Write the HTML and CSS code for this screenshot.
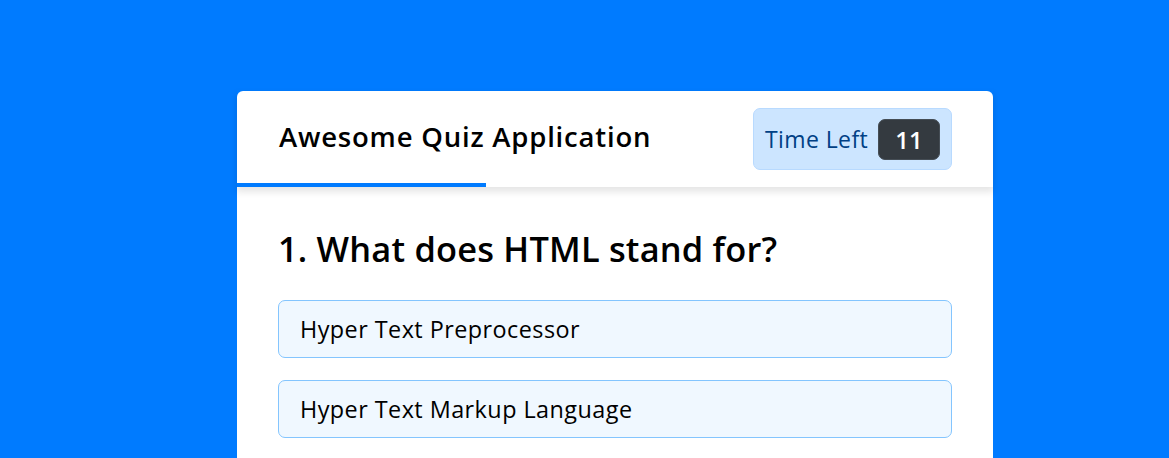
FILE: index.html
```html
<!DOCTYPE html>
<html lang="en">
<head>
<meta charset="utf-8">
<title>Awesome Quiz Application</title>
<link rel="stylesheet" href="styles.css">
</head>
<body>
  <div class="quiz-box">
    <header class="quiz-header">
      <div class="title">Awesome Quiz Application</div>
      <div class="timer">
        <div class="time-label">Time Left</div>
        <div class="time-sec">11</div>
      </div>
      <div class="time-line" style="width: 249px;"></div>
    </header>
    <section class="quiz-body">
      <div class="question">1. What does HTML stand for?</div>
      <div class="options">
        <div class="option">Hyper Text Preprocessor</div>
        <div class="option">Hyper Text Markup Language</div>
      </div>
    </section>
  </div>
</body>
</html>
```

FILE: styles.css
```css
* { box-sizing: border-box; }
html, body { margin: 0; padding: 0; }
body {
  background: #007bff;
  font-family: "Open Sans", "Noto Sans", sans-serif;
  height: 458px;
  overflow: hidden;
}
.quiz-box {
  width: 756px;
  margin: 91px 0 0 237px;
  background: #fff;
  border-radius: 6px;
}
.quiz-header {
  position: relative;
  height: 96px;
  padding: 0 41px 0 42px;
  display: flex;
  align-items: center;
  justify-content: space-between;
  box-shadow: 0 4px 7px 1px rgba(0,0,0,0.1);
  z-index: 1;
}
.title {
  font-size: 27.5px;
  font-weight: 600;
  letter-spacing: 0.8px;
  color: #000;
  margin-top: -5px;
}
.timer {
  width: 199px;
  height: 62px;
  background: #cce5ff;
  border: 1px solid #b8daff;
  border-radius: 7px;
  display: flex;
  align-items: center;
  justify-content: space-between;
  padding: 0 11px 0 11px;
}
.time-label {
  font-size: 23px;
  letter-spacing: 0.4px;
  color: #004085;
}
.time-sec {
  width: 62px;
  height: 41px;
  background: #343a40;
  border: 1px solid #454d55;
  border-radius: 7px;
  color: #fff;
  font-size: 24px;
  font-weight: 600;
  display: flex;
  align-items: center;
  justify-content: center;
}
.time-line {
  position: absolute;
  left: 0;
  bottom: 0;
  height: 4px;
  background: #007bff;
}
.quiz-body {
  padding: 36px 41px 60px 41px;
}
.question {
  font-size: 34.4px;
  font-weight: 600;
  letter-spacing: 0.2px;
  color: #000;
  line-height: 1.5;
}
.options {
  margin-top: 25px;
  display: flex;
  flex-direction: column;
  gap: 22px;
}
.option {
  height: 58px;
  background: aliceblue;
  border: 1px solid #84c5fe;
  border-radius: 7px;
  padding: 0 21px;
  display: flex;
  align-items: center;
  font-size: 23.4px;
  letter-spacing: 0.45px;
  color: #000;
}
```
